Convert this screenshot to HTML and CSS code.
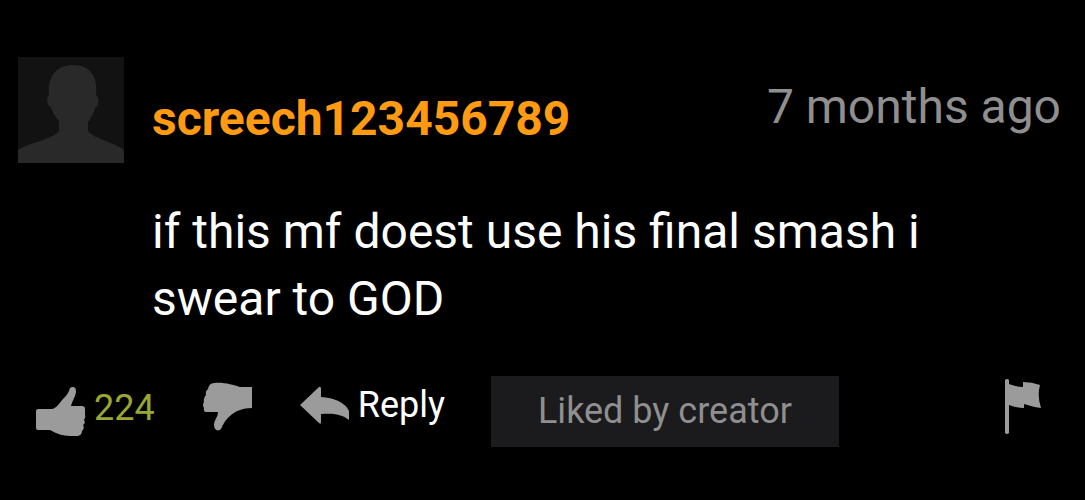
FILE: index.html
```html
<!DOCTYPE html>
<html lang="en">
<head>
    <meta charset="UTF-8">
    <meta name="viewport" content="width=device-width, initial-scale=1.0">
    <title>Comments</title>
    <link rel="stylesheet" href="styles.css">
</head>
<body>
    <article class="comment">
        <header class="comment-header">
            <svg class="avatar" viewBox="0 0 106 106" role="img" aria-label="User avatar">
                <rect width="106" height="106" fill="#121212"/>
                <path fill="#292929" d="M0 106V93C10 86 36 82 41 74V64C37 60 34 54 33 50C29 49 28 41 31 38C29 19 39 8 55 8C72 8 80 19 78 38C82 40 81 49 77 51C76 56 73 61 70 65V74C76 82 96 85 106 93V106Z"/>
            </svg>
            <a class="username" href="#">screech123456789</a>
            <time class="date">7 months ago</time>
        </header>

        <p class="comment-text">if this mf doest use his final smash i swear to GOD</p>

        <footer class="actions">
            <button class="action like" type="button" aria-label="Like">
                <svg class="icon" viewBox="0 0 50 50">
                    <path fill="#9b9b9b" d="M2 23Q0 23 0 25V42Q0 44 2 44H14C19 47 27 50 34 50H42Q46 49 46 45Q49 42 47 39Q50 37 48 34Q50 31 49 28V23Q49 20 46 20H35C36 15 40 10 40 5C40 1 37 0 34 2C33 6 31 9 28 12C24 16 21 22 16 23Z"/>
                </svg>
                <span class="votes">224</span>
            </button>
            <button class="action dislike" type="button" aria-label="Dislike">
                <svg class="icon" viewBox="0 0 50 50">
                    <path fill="#9b9b9b" d="M49 5V26C40 26 32 29 27 34C22 38 20 43 18 47C15 50 11 48 11 43C11 38 15 35 15 30H4Q0 30 1 26Q-1 23 1 20Q0 16 3 13Q2 9 5 7Q6 1 11 1C21 0 30 3 37 5Z"/>
                </svg>
            </button>
            <button class="action reply" type="button">
                <svg class="icon-reply" viewBox="0 0 50 40">
                    <path fill="#9b9b9b" d="M0 20L19 2Q21 1 21 4V12C34 13 45 17 49 26V35C42 29 32 28 21 29V37Q21 40 19 38Z"/>
                </svg>
                Reply
            </button>
            <span class="badge">Liked by creator</span>
            <button class="action flag" type="button" aria-label="Report">
                <svg class="icon-flag" viewBox="0 0 36 56">
                    <path fill="#9b9b9b" d="M0 1Q2-1 4 1V5Q11 8 18 8V3Q27 3 35 6Q32 17 36 29Q28 28 19 25V29Q12 29 4 26V54Q2 56 0 54Z"/>
                </svg>
            </button>
        </footer>
    </article>
</body>
</html>
```
FILE: styles.css
```css
* {
    margin: 0;
    padding: 0;
    box-sizing: border-box;
}

body {
    background-color: #000;
    color: #fff;
    font-family: Roboto, sans-serif;
}

.comment {
    padding: 57px 24px 53px 18px;
}

.comment-header {
    display: flex;
    align-items: flex-start;
}

.avatar {
    width: 106px;
    height: 106px;
    flex-shrink: 0;
}

.username {
    margin-left: 28px;
    padding-top: 34px;
    color: #ff9b13;
    font-size: 48px;
    font-weight: 700;
    line-height: 56px;
    text-decoration: none;
}

.date {
    margin-left: auto;
    padding-top: 22px;
    color: #8f8f8f;
    font-size: 48px;
    line-height: 56px;
    white-space: nowrap;
}

.comment-text {
    margin: 35px 100px 44px 134px;
    font-size: 48px;
    line-height: 67px;
}

.actions {
    display: flex;
    align-items: flex-start;
}

.action {
    display: flex;
    align-items: center;
    background: none;
    border: none;
    color: #fff;
    font-family: inherit;
    font-size: 36px;
    line-height: 44px;
    cursor: pointer;
}

.icon {
    width: 50px;
    height: 50px;
}

.like {
    margin-left: 18px;
    padding-top: 10px;
    gap: 8px;
}

.like .votes {
    align-self: flex-start;
    color: #98a832;
}

.dislike {
    margin-left: 48px;
    padding-top: 6px;
}

.reply {
    margin-left: 47px;
    padding-top: 7px;
    gap: 8px;
}

.icon-reply {
    width: 50px;
    height: 40px;
}

.badge {
    margin-left: 46px;
    padding: 0 47px;
    background-color: #1b1a1c;
    color: #8f8f8f;
    font-size: 36px;
    line-height: 71px;
}

.flag {
    margin-left: auto;
    margin-right: 20px;
    padding-top: 3px;
}

.icon-flag {
    width: 36px;
    height: 56px;
}
```
